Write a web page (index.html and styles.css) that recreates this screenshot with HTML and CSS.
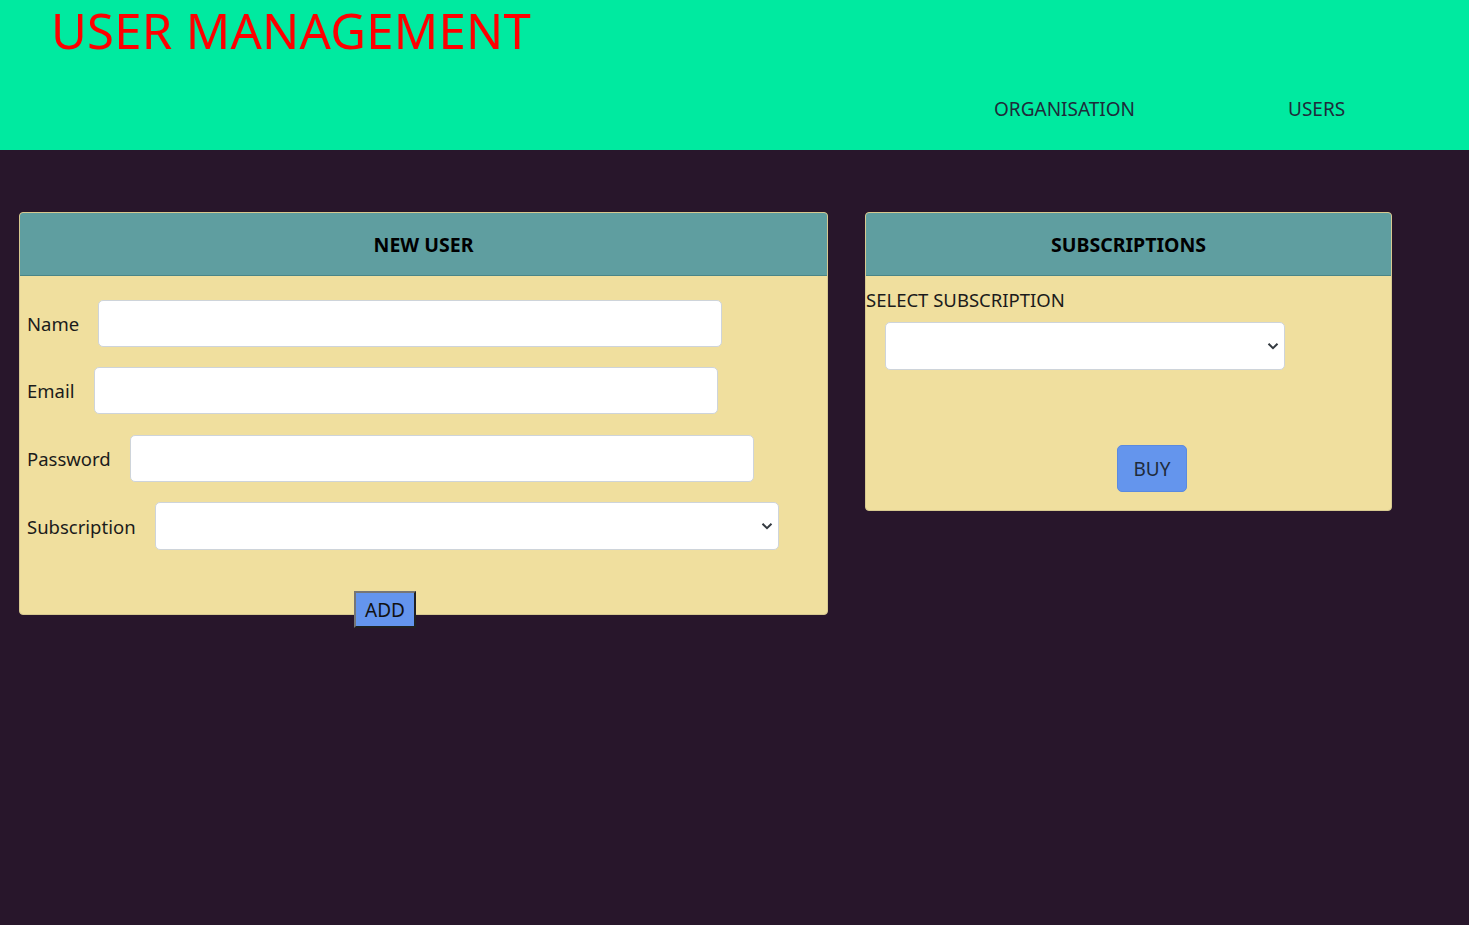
FILE: index.html
```html
<!DOCTYPE html>
<html>
<head>
<meta charset="utf-8">
<title>User Management</title>
<link rel="stylesheet" href="styles.css">
</head>
<body>
<header class="topbar">
  <h1 class="title">USER MANAGEMENT</h1>
  <nav class="nav">
    <a class="nav-link">ORGANISATION</a>
    <a class="nav-link">USERS</a>
  </nav>
</header>
<main class="main">
  <section class="card card-new">
    <div class="card-head">NEW USER</div>
    <div class="card-body form-body">
      <div class="row"><label class="lbl">Name</label><input class="field" type="text"></div>
      <div class="row"><label class="lbl">Email</label><input class="field" type="text"></div>
      <div class="row"><label class="lbl">Password</label><input class="field" type="password"></div>
      <div class="row"><label class="lbl">Subscription</label>
        <div class="select field"><svg class="chev" width="12" height="8" viewBox="0 0 12 8"><path d="M1.5 1.8 6 6.2 10.5 1.8" fill="none" stroke="#343a40" stroke-width="2"/></svg></div>
      </div>
      <button class="add-btn">ADD</button>
    </div>
  </section>
  <section class="card card-sub">
    <div class="card-head">SUBSCRIPTIONS</div>
    <div class="card-body sub-body">
      <div class="sub-label">SELECT SUBSCRIPTION</div>
      <div class="select sub-select"><svg class="chev" width="12" height="8" viewBox="0 0 12 8"><path d="M1.5 1.8 6 6.2 10.5 1.8" fill="none" stroke="#343a40" stroke-width="2"/></svg></div>
      <button class="buy-btn">BUY</button>
    </div>
  </section>
</main>
</body>
</html>
```
FILE: styles.css
```css
* { box-sizing: border-box; }
html, body { margin: 0; padding: 0; }
body {
  background: #28162b;
  font-family: "Noto Sans", "Open Sans", sans-serif;
  color: #212529;
  min-height: 925px;
}
.topbar {
  background: #00eaa0;
  height: 150px;
}
.title {
  margin: 0;
  padding-left: 51px;
  padding-top: 2px;
  font-size: 49px;
  font-weight: 400;
  color: #ff0000;
  line-height: 56px;
  letter-spacing: 0.3px;
}
.nav {
  display: flex;
  padding-left: 994px;
  padding-top: 39px;
}
.nav-link {
  font-size: 19px;
  color: #1f2b3a;
  line-height: 24px;
}
.nav-link + .nav-link { margin-left: 153px; }
.main {
  display: flex;
  align-items: flex-start;
  padding: 62px 0 0 19px;
  gap: 37px;
}
.card {
  background: #f0df9e;
  border: 1px solid #d7c990;
  border-radius: 4px;
  display: flex;
  flex-direction: column;
}
.card-new { width: 809px; height: 403px; }
.card-sub { width: 527px; height: 299px; }
.card-head {
  flex: none;
  background: #5f9ea0;
  height: 63px;
  border-bottom: 1px solid #4a8587;
  border-radius: 3px 3px 0 0;
  display: flex;
  align-items: center;
  justify-content: center;
  font-weight: 700;
  font-size: 19.5px;
  color: #000;
}
.card-body { flex: 1 1 0; min-height: 0; }
.form-body { padding: 24px 0 0 7px; }
.row {
  display: flex;
  align-items: center;
  height: 47px;
  margin-bottom: 20px;
}
.row:nth-child(3) { margin-top: 21px; }
.row:nth-child(4) { height: 48px; }
.lbl {
  font-size: 18.5px;
  color: #1b1b1b;
  margin-right: 19px;
}
.field {
  width: 624px;
  height: 47px;
  background: #fff;
  border: 1px solid #ced4da;
  border-radius: 5px;
  font-size: 18px;
}
.select {
  position: relative;
  display: block;
}
.row .select { height: 48px; }
.chev {
  position: absolute;
  right: 5px;
  top: 50%;
  margin-top: -4px;
}
.add-btn {
  display: block;
  margin: 41px 0 0 327px;
  width: 62px;
  height: 37px;
  background: #6495ed;
  border: 2px outset #767676;
  font-family: inherit;
  font-size: 19px;
  color: #111;
  padding: 0;
}
.sub-body { padding: 12px 0 0 0; }
.sub-label {
  font-size: 18.5px;
  color: #1b1b1b;
  line-height: 24px;
}
.sub-select {
  width: 400px;
  height: 48px;
  margin: 10px 0 0 19px;
  background: #fff;
  border: 1px solid #ced4da;
  border-radius: 5px;
}
.buy-btn {
  display: block;
  margin: 75px 0 0 251px;
  width: 70px;
  height: 47px;
  background: #6495ed;
  border: 1px solid #5a8ae0;
  border-radius: 5px;
  font-family: inherit;
  font-size: 19px;
  color: #1f2b3a;
  padding: 0;
}
```
